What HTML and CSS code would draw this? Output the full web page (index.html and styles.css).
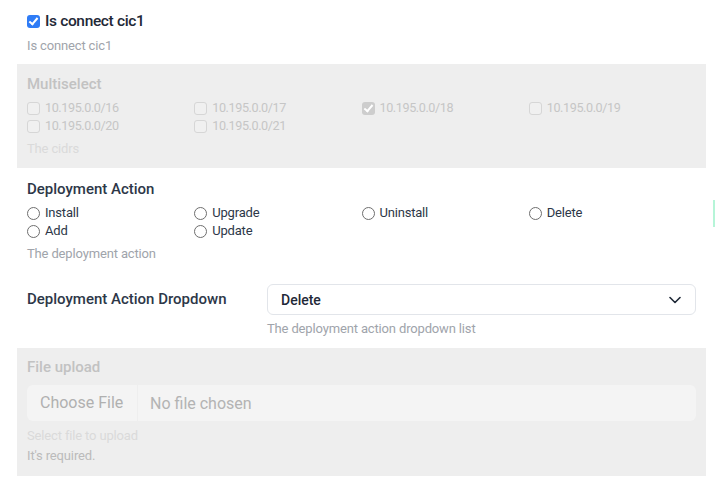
FILE: index.html
```html
<!DOCTYPE html>
<html>
<head>
<meta charset="utf-8">
<link rel="stylesheet" href="styles.css">
</head>
<body>
<div class="form">
  <div class="field top-field">
    <label class="check-main"><span class="cb cb-on"></span><span>Is connect cic1</span></label>
    <div class="help">Is connect cic1</div>
  </div>

  <div class="field disabled multi-field">
    <div class="title">Multiselect</div>
    <div class="options">
      <label class="opt"><span class="cb cb-dis"></span>10.195.0.0/16</label>
      <label class="opt"><span class="cb cb-dis"></span>10.195.0.0/17</label>
      <label class="opt"><span class="cb cb-dis-on"></span>10.195.0.0/18</label>
      <label class="opt"><span class="cb cb-dis"></span>10.195.0.0/19</label>
      <label class="opt"><span class="cb cb-dis"></span>10.195.0.0/20</label>
      <label class="opt"><span class="cb cb-dis"></span>10.195.0.0/21</label>
    </div>
    <div class="help faint">The cidrs</div>
  </div>

  <div class="field radios-field">
    <div class="title">Deployment Action</div>
    <div class="options">
      <label class="opt"><span class="rd"></span>Install</label>
      <label class="opt"><span class="rd"></span>Upgrade</label>
      <label class="opt"><span class="rd"></span>Uninstall</label>
      <label class="opt"><span class="rd"></span>Delete</label>
      <label class="opt"><span class="rd"></span>Add</label>
      <label class="opt"><span class="rd"></span>Update</label>
    </div>
    <div class="help">The deployment action</div>
  </div>

  <div class="field row-field">
    <div class="row-label">Deployment Action Dropdown</div>
    <div class="row-control">
      <div class="select">
        <span>Delete</span>
        <svg class="chev" width="12" height="8" viewBox="0 0 12 8"><path d="M1 1.5 L6 6.5 L11 1.5" fill="none" stroke="#1f2937" stroke-width="1.6" stroke-linecap="round" stroke-linejoin="round"/></svg>
      </div>
      <div class="help tight">The deployment action dropdown list</div>
    </div>
  </div>

  <div class="field disabled file-field">
    <div class="title">File upload</div>
    <div class="file">
      <span class="file-btn">Choose File</span>
      <span class="file-name">No file chosen</span>
    </div>
    <div class="help faint">Select file to upload</div>
    <div class="help req">It's required.</div>
  </div>
</div>
<div class="edge"></div>
</body>
</html>
```

FILE: styles.css
```css
html, body {
  margin: 0;
  padding: 0;
  background: #ffffff;
}
body {
  font-family: Roboto, "Noto Sans", "Liberation Sans", sans-serif;
  color: #2d3748;
  position: relative;
}
.form {
  margin: 0 9px 0 17px;
  width: 689px;
}
.field {
  padding: 10px;
}
.top-field {
  padding: 11px 10px 9px;
}
.check-main {
  display: flex;
  align-items: center;
  gap: 5px;
  height: 20px;
  font-size: 15.5px;
  font-weight: 500;
  letter-spacing: -0.35px;
  color: #1f2937;
}
.help {
  font-size: 13px;
  line-height: 18px;
  color: #a0a4ab;
  margin-top: 6px;
  letter-spacing: -0.15px;
}
.disabled {
  background: #eeeeee;
}
.title {
  font-size: 15px;
  line-height: 20px;
  font-weight: 500;
  color: #2d3748;
}
.disabled .title {
  color: #c2c2c2;
}
.options {
  display: grid;
  grid-template-columns: repeat(4, 1fr);
  margin-top: 5px;
}
.opt {
  display: flex;
  align-items: center;
  gap: 5px;
  font-size: 13px;
  letter-spacing: -0.2px;
  line-height: 18px;
  height: 18px;
  color: #2d3748;
}
.multi-field .opt {
  font-size: 12.6px;
  letter-spacing: -0.4px;
}
.disabled .opt {
  color: #c6c6c6;
}
.disabled .options + .help {
  margin-top: 5px;
}
.faint {
  color: #dadada;
}
.cb {
  width: 13px;
  height: 13px;
  box-sizing: border-box;
  border-radius: 3px;
  flex: none;
  position: relative;
}
.cb-on {
  background: #2f7cf6;
}
.cb-on::after, .cb-dis-on::after {
  content: "";
  position: absolute;
  left: 4px;
  top: 1.5px;
  width: 3px;
  height: 7px;
  border: solid #ffffff;
  border-width: 0 2px 2px 0;
  transform: rotate(40deg);
}
.cb-dis {
  border: 1px solid #d6d6d6;
  background: #f0f0f0;
}
.cb-dis-on {
  background: #cdcdcd;
}
.rd {
  width: 13px;
  height: 13px;
  box-sizing: border-box;
  border: 1px solid #6e6e6e;
  border-radius: 50%;
  background: #ffffff;
  flex: none;
}
.radios-field {
  padding-top: 11px;
}
.radios-field .options {
  margin-top: 5px;
}
.radios-field .help {
  margin-top: 5px;
}
.row-field {
  display: grid;
  grid-template-columns: 240px 1fr;
  align-items: start;
  padding-top: 11px;
}
.row-label {
  font-size: 15px;
  font-weight: 500;
  line-height: 20px;
  margin-top: 5px;
  color: #2d3748;
}
.select {
  height: 31px;
  box-sizing: border-box;
  border: 1px solid #e2e5ea;
  border-radius: 6px;
  display: flex;
  align-items: center;
  justify-content: space-between;
  padding: 0 14px 0 13px;
  font-size: 14px;
  font-weight: 500;
  color: #1f2937;
}
.help.tight {
  margin-top: 5px;
}
.file-field .title {
  margin-bottom: 8px;
}
.file-field {
  padding-top: 9px;
  padding-bottom: 11px;
}
.file {
  display: flex;
  align-items: center;
  height: 36px;
  background: #f4f4f4;
  border-radius: 6px;
  font-size: 16px;
  color: #b3b3b3;
}
.file-btn {
  width: 111px;
  box-sizing: border-box;
  padding-left: 13px;
  height: 36px;
  line-height: 36px;
  border-right: 1px solid #eeeeee;
  color: #b0b0b0;
}
.file-name {
  padding-left: 12px;
}
.file-field .faint {
  margin-top: 6px;
}
.req {
  margin-top: 2px;
  color: #bbbbbb;
}
.edge {
  position: absolute;
  left: 713px;
  top: 200px;
  width: 2px;
  height: 27px;
  background: #b6f5d8;
}
```
